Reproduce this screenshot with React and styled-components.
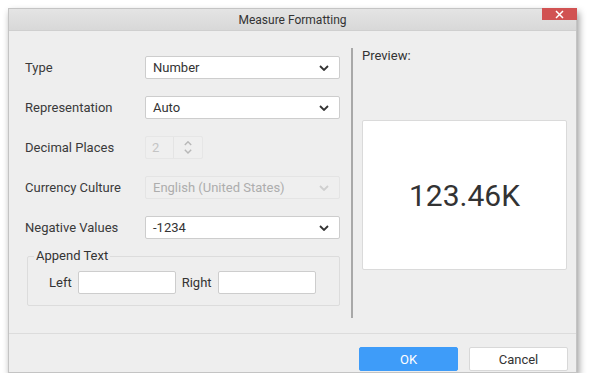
import React from 'react'
import styled, { createGlobalStyle } from 'styled-components'

const Global = createGlobalStyle`
  html, body {
    margin: 0;
    padding: 0;
    background: #fff;
    font-family: Roboto, "Liberation Sans", sans-serif;
  }
  * { box-sizing: border-box; }
`

const Dialog = styled.div`
  position: relative;
  margin: 8px 0 0 8px;
  width: 569px;
  height: 365px;
  background: #eeeeee;
  border: 1px solid #c4c4c4;
  box-shadow: 2px 4px 7px rgba(0, 0, 0, 0.4);
  display: flex;
  flex-direction: column;
`

const TitleBar = styled.div`
  height: 22px;
  flex: none;
  display: flex;
  align-items: center;
  justify-content: center;
  background: linear-gradient(#e4e4e4, #d8d8d8);
  border-bottom: 1px solid #cfcfcf;
  font-size: 12px;
  color: #333;
`

const Close = styled.div`
  position: absolute;
  top: -1px;
  right: -1px;
  width: 35px;
  height: 12px;
  background: #d15252;
  display: flex;
  align-items: center;
  justify-content: center;
`

const Body = styled.div`
  flex: 1;
  display: flex;
`

const FormPane = styled.div`
  width: 342px;
  padding: 25px 0 0 16px;
`

const Grid = styled.div`
  display: grid;
  grid-template-columns: 120px 195px;
  grid-auto-rows: 23px;
  row-gap: 17px;
  align-items: center;
`

const Label = styled.div`
  font-size: 13px;
  color: #3a3a3a;
`

const Select = styled.div`
  height: 23px;
  display: flex;
  align-items: center;
  justify-content: space-between;
  padding: 0 10px 0 7px;
  font-size: 13px;
  border-radius: 2px;
  background: ${p => (p.$disabled ? '#efefef' : '#fff')};
  border: 1px solid ${p => (p.$disabled ? '#e4e4e4' : '#cdcdcd')};
  color: ${p => (p.$disabled ? '#adadad' : '#333')};
`

const Spin = styled.div`
  display: flex;
  height: 23px;
  width: 58px;
  border: 1px solid #e6e6e6;
  border-radius: 2px;
  background: #efefef;
`

const SpinValue = styled.div`
  width: 28px;
  padding-left: 6px;
  display: flex;
  align-items: center;
  font-size: 13px;
  color: #c4c4c4;
  border-right: 1px solid #e4e4e4;
`

const SpinArrows = styled.div`
  flex: 1;
  display: flex;
  flex-direction: column;
  align-items: center;
  justify-content: center;
  gap: 3px;
`

const Group = styled.fieldset`
  margin: 10px 0 0 2px;
  width: 313px;
  padding: 0 0 11px 6px;
  border: 1px solid #dcdcdc;
  border-radius: 2px;
`

const Legend = styled.legend`
  padding: 0 2px;
  font-size: 13px;
  color: #333;
  line-height: 14px;
`

const AppendRow = styled.div`
  display: flex;
  align-items: center;
  margin: 8px 0 0 15px;
  gap: 6px;
  font-size: 13px;
  color: #333;
`

const TextBox = styled.div`
  width: 98px;
  height: 23px;
  background: #fff;
  border: 1px solid #cdcdcd;
  border-radius: 2px;
`

const PreviewPane = styled.div`
  flex: 1;
  margin: 17px 0 15px;
  border-left: 2px solid #a8a8a8;
  padding: 0 9px 0 9px;
  display: flex;
  flex-direction: column;
`

const PreviewLabel = styled.div`
  font-size: 13px;
  color: #333;
  line-height: 16px;
`

const PreviewBox = styled.div`
  margin-top: 56px;
  height: 150px;
  background: #fff;
  border: 1px solid #dadada;
  border-radius: 2px;
  display: flex;
  align-items: center;
  justify-content: center;
  font-size: 30px;
  color: #333;
`

const Footer = styled.div`
  height: 39px;
  flex: none;
  border-top: 1px solid #dcdcdc;
  display: flex;
  justify-content: flex-end;
  align-items: flex-start;
  padding: 13px 8px 0 0;
  gap: 11px;
`

const Button = styled.div`
  width: 99px;
  height: 24px;
  display: flex;
  align-items: center;
  justify-content: center;
  font-size: 13px;
  border-radius: 2px;
  background: ${p => (p.$primary ? '#3e9cf9' : '#fff')};
  color: ${p => (p.$primary ? '#fff' : '#333')};
  border: 1px solid ${p => (p.$primary ? '#3e9cf9' : '#d8d8d8')};
`

const Chevron = ({ color = '#333', up, size = 10 }) => (
  <svg width={size} height={size * 0.6} viewBox="0 0 10 6">
    <path
      d={up ? 'M1 5 L5 1 L9 5' : 'M1 1 L5 5 L9 1'}
      fill="none"
      stroke={color}
      strokeWidth="1.8"
    />
  </svg>
)

export default function App() {
  return (
    <>
      <Global />
      <Dialog>
        <TitleBar>Measure Formatting</TitleBar>
        <Close>
          <svg width="9" height="9" viewBox="0 0 9 9">
            <path d="M1 1 L8 8 M8 1 L1 8" stroke="#fff" strokeWidth="1.5" />
          </svg>
        </Close>
        <Body>
          <FormPane>
            <Grid>
              <Label>Type</Label>
              <Select>
                Number <Chevron />
              </Select>
              <Label>Representation</Label>
              <Select>
                Auto <Chevron />
              </Select>
              <Label>Decimal Places</Label>
              <Spin>
                <SpinValue>2</SpinValue>
                <SpinArrows>
                  <Chevron up color="#b8b8b8" size={8} />
                  <Chevron color="#b8b8b8" size={8} />
                </SpinArrows>
              </Spin>
              <Label>Currency Culture</Label>
              <Select $disabled>
                English (United States) <Chevron color="#cfcfcf" />
              </Select>
              <Label>Negative Values</Label>
              <Select>
                -1234 <Chevron />
              </Select>
            </Grid>
            <Group>
              <Legend>Append Text</Legend>
              <AppendRow>
                Left <TextBox />
                Right <TextBox />
              </AppendRow>
            </Group>
          </FormPane>
          <PreviewPane>
            <PreviewLabel>Preview:</PreviewLabel>
            <PreviewBox>123.46K</PreviewBox>
          </PreviewPane>
        </Body>
        <Footer>
          <Button $primary>OK</Button>
          <Button>Cancel</Button>
        </Footer>
      </Dialog>
    </>
  )
}
